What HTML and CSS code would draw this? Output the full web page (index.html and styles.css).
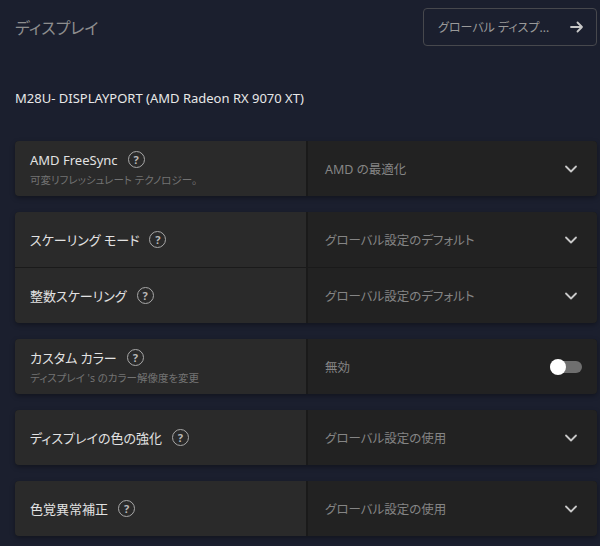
FILE: index.html
```html
<!DOCTYPE html>
<html lang="ja">
<head>
    <meta charset="UTF-8">
    <title>ディスプレイ</title>
    <link rel="stylesheet" href="styles.css">
</head>
<body>
    <div class="page">
        <div class="header">
            <h1 class="title">ディスプレイ</h1>
            <button class="global-btn">
                <span>グローバル ディスプ...</span>
                <svg width="16" height="16" viewBox="0 0 16 16"><path d="M2 8h11M8.5 3.5L13 8l-4.5 4.5" fill="none" stroke="#c8c8c8" stroke-width="1.8" stroke-linecap="round" stroke-linejoin="round"/></svg>
            </button>
        </div>

        <div class="device">M28U- DISPLAYPORT (AMD Radeon RX 9070 XT)</div>

        <div class="card">
            <div class="row">
                <div class="label-cell">
                    <div class="label">AMD FreeSync <span class="help">?</span></div>
                    <div class="sub">可変リフレッシュレート テクノロジー。</div>
                </div>
                <div class="value-cell">
                    <span class="value">AMD の最適化</span>
                    <svg class="chev" width="14" height="14" viewBox="0 0 14 14"><path d="M2 4.5l5 5 5-5" fill="none" stroke="#c8c8c8" stroke-width="1.8" stroke-linecap="round" stroke-linejoin="round"/></svg>
                </div>
            </div>
        </div>

        <div class="card">
            <div class="row">
                <div class="label-cell">
                    <div class="label">スケーリング モード <span class="help">?</span></div>
                </div>
                <div class="value-cell">
                    <span class="value">グローバル設定のデフォルト</span>
                    <svg class="chev" width="14" height="14" viewBox="0 0 14 14"><path d="M2 4.5l5 5 5-5" fill="none" stroke="#c8c8c8" stroke-width="1.8" stroke-linecap="round" stroke-linejoin="round"/></svg>
                </div>
            </div>
            <div class="row">
                <div class="label-cell">
                    <div class="label">整数スケーリング <span class="help">?</span></div>
                </div>
                <div class="value-cell">
                    <span class="value">グローバル設定のデフォルト</span>
                    <svg class="chev" width="14" height="14" viewBox="0 0 14 14"><path d="M2 4.5l5 5 5-5" fill="none" stroke="#c8c8c8" stroke-width="1.8" stroke-linecap="round" stroke-linejoin="round"/></svg>
                </div>
            </div>
        </div>

        <div class="card">
            <div class="row">
                <div class="label-cell">
                    <div class="label">カスタム カラー <span class="help">?</span></div>
                    <div class="sub">ディスプレイ 's のカラー解像度を変更</div>
                </div>
                <div class="value-cell">
                    <span class="value">無効</span>
                    <span class="toggle"><span class="knob"></span></span>
                </div>
            </div>
        </div>

        <div class="card">
            <div class="row">
                <div class="label-cell">
                    <div class="label">ディスプレイの色の強化 <span class="help">?</span></div>
                </div>
                <div class="value-cell">
                    <span class="value">グローバル設定の使用</span>
                    <svg class="chev" width="14" height="14" viewBox="0 0 14 14"><path d="M2 4.5l5 5 5-5" fill="none" stroke="#c8c8c8" stroke-width="1.8" stroke-linecap="round" stroke-linejoin="round"/></svg>
                </div>
            </div>
        </div>

        <div class="card">
            <div class="row">
                <div class="label-cell">
                    <div class="label">色覚異常補正 <span class="help">?</span></div>
                </div>
                <div class="value-cell">
                    <span class="value">グローバル設定の使用</span>
                    <svg class="chev" width="14" height="14" viewBox="0 0 14 14"><path d="M2 4.5l5 5 5-5" fill="none" stroke="#c8c8c8" stroke-width="1.8" stroke-linecap="round" stroke-linejoin="round"/></svg>
                </div>
            </div>
        </div>
    </div>
</body>
</html>
```

FILE: styles.css
```css
body {
    margin: 0;
    background: #1b1f2e;
    font-family: "Noto Sans", "Noto Sans CJK JP", sans-serif;
    font-feature-settings: "palt";
    overflow: hidden;
}
.page {
    padding: 8px 3px 0 15px;
}
.header {
    display: flex;
    justify-content: space-between;
    align-items: center;
    height: 38px;
}
.title {
    margin: 0;
    font-size: 16px;
    font-weight: normal;
    color: #8e8e8e;
}
.global-btn {
    width: 174px;
    height: 38px;
    display: flex;
    justify-content: space-between;
    align-items: center;
    padding: 0 11px 0 14px;
    background: transparent;
    border: 1px solid #47484d;
    border-radius: 4px;
    color: #9a9a9a;
    font-family: inherit;
    font-feature-settings: "palt";
    font-size: 12px;
    box-sizing: border-box;
}
.device {
    margin: 42px 0 33px;
    color: #e8e8e8;
    font-size: 13px;
    line-height: 20px;
}
.card {
    width: 582px;
    margin-bottom: 16px;
    background: #1a1a1a;
    border-radius: 4px;
    overflow: hidden;
    box-shadow: 0 2px 5px rgba(0,0,0,0.35);
    display: flex;
    flex-direction: column;
    gap: 1px;
}
.row {
    display: flex;
    height: 55px;
    gap: 2px;
}
.label-cell {
    width: 276px;
    background: #2a2a2a;
    padding: 0 0 0 15px;
    display: flex;
    flex-direction: column;
    justify-content: center;
}
.value-cell {
    flex: 1;
    background: #222222;
    display: flex;
    align-items: center;
    justify-content: space-between;
    padding: 0 19px 0 17px;
}
.label {
    color: #e2e2e2;
    font-size: 13px;
    display: flex;
    align-items: center;
    gap: 8px;
    line-height: 20px;
}
.help {
    width: 15px;
    height: 15px;
    border: 1.5px solid #a8a8a8;
    border-radius: 50%;
    color: #b8b8b8;
    font-size: 11px;
    font-weight: bold;
    display: inline-flex;
    align-items: center;
    justify-content: center;
    line-height: 1;
    margin-left: 2px;
}
.sub {
    color: #737373;
    font-size: 10.5px;
    margin-top: 2px;
    line-height: 16px;
}
.value {
    color: #858585;
    font-size: 12.5px;
}
.toggle {
    width: 32px;
    height: 12px;
    background: #6f6f6f;
    border-radius: 6px;
    position: relative;
    margin-right: -4px;
}
.knob {
    position: absolute;
    left: 0;
    top: -2px;
    width: 16px;
    height: 16px;
    border-radius: 50%;
    background: #ffffff;
}
```
